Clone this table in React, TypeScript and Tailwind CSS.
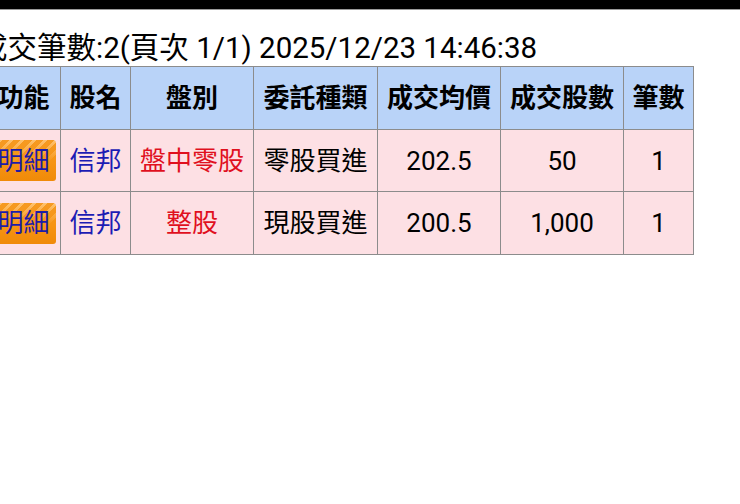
import React from 'react';

type Row = {
  board: string;
  kind: string;
  price: string;
  qty: string;
  count: string;
};

const rows: Row[] = [
  { board: '盤中零股', kind: '零股買進', price: '202.5', qty: '50', count: '1' },
  { board: '整股', kind: '現股買進', price: '200.5', qty: '1,000', count: '1' },
];

const headers = ['功能', '股名', '盤別', '委託種類', '成交均價', '成交股數', '筆數'];
const widths = ['w-[74px]', 'w-[70px]', 'w-[123px]', 'w-[124px]', 'w-[123px]', 'w-[123px]', 'w-[70px]'];

const DetailButton: React.FC = () => (
  <span className="inline-flex items-center h-[41px] px-[6px] rounded-[3px] text-[#1c1ca8] bg-[linear-gradient(to_bottom,rgba(246,148,20,0)_0%,#f69414_55%,#f08a08_100%),repeating-linear-gradient(135deg,#f69a22_0px,#f69a22_5px,#ffc26e_5px,#ffc26e_8px)]">
    明細
  </span>
);

const App: React.FC = () => {
  return (
    <div
      className="w-[740px] h-[504px] bg-white overflow-hidden text-black"
      style={{ fontFamily: 'Roboto, "Noto Sans CJK TC", sans-serif' }}
    >
      <div className="h-[10px] bg-black border-b border-[#9a9a9a]" />

      <div className="ml-[-22px] mt-[21px] text-[29.5px] leading-[35px] whitespace-nowrap">
        成交筆數:2(頁次 1/1) 2025/12/23 14:46:38
      </div>

      <table className="ml-[-14px] border-collapse table-fixed text-[26px] leading-none">
        <thead>
          <tr className="h-[63px] bg-[#b9d3f8]">
            {headers.map((h, i) => (
              <th key={h} className={`${widths[i]} border border-[#8c8c8c] font-bold text-center p-0`}>
                {h}
              </th>
            ))}
          </tr>
        </thead>
        <tbody>
          {rows.map((r, i) => (
            <tr key={i} className={`${i === 0 ? 'h-[62px]' : 'h-[63px]'} bg-[#fde0e4]`}>
              <td className="border border-[#8c8c8c] text-center p-0">
                <DetailButton />
              </td>
              <td className="border border-[#8c8c8c] text-center p-0 text-[#1c1cb4]">信邦</td>
              <td className="border border-[#8c8c8c] text-center p-0 text-[#e0101e]">{r.board}</td>
              <td className="border border-[#8c8c8c] text-center p-0">{r.kind}</td>
              <td className="border border-[#8c8c8c] text-center p-0">{r.price}</td>
              <td className="border border-[#8c8c8c] text-center p-0">{r.qty}</td>
              <td className="border border-[#8c8c8c] text-center p-0">{r.count}</td>
            </tr>
          ))}
        </tbody>
      </table>
    </div>
  );
};

export default App;
